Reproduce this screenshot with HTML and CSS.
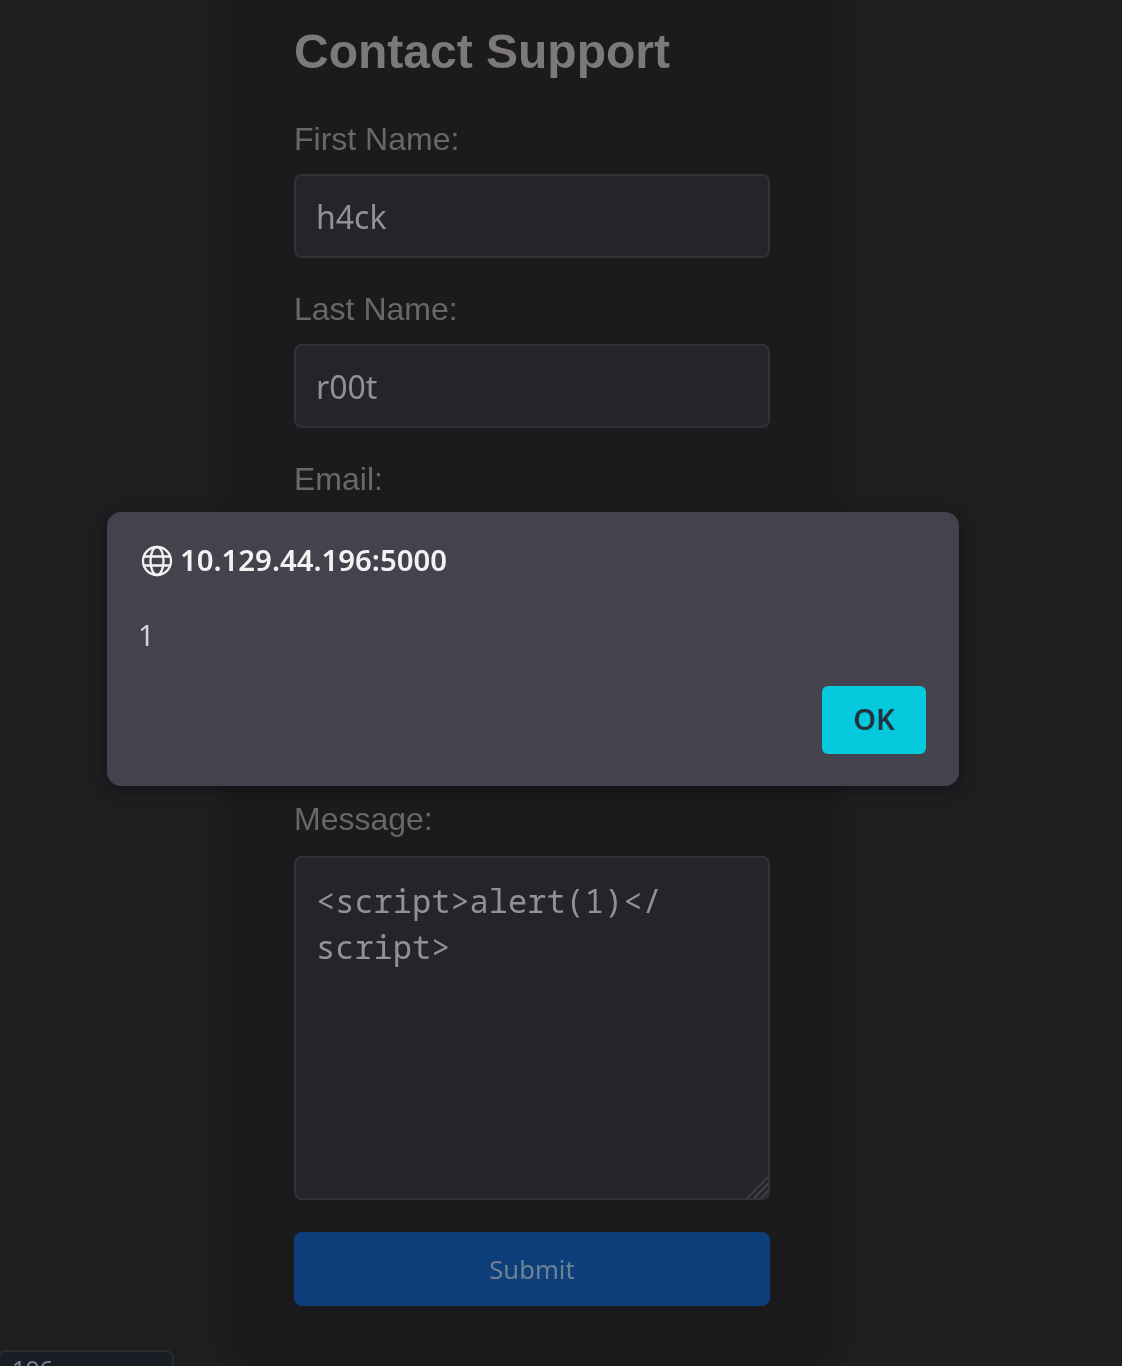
FILE: index.html
```html
<!DOCTYPE html>
<html lang="en">
<head>
    <meta charset="UTF-8">
    <meta name="viewport" content="width=device-width, initial-scale=1.0">
    <title>Contact Support</title>
    <link rel="stylesheet" href="styles.css">
</head>
<body>

    <div class="contact-container">
        <h1>Contact Support</h1>
        <form class="contact-form">
            <label for="first_name">First Name:</label>
            <input type="text" id="first_name" value="h4ck">

            <label for="last_name">Last Name:</label>
            <input type="text" id="last_name" value="r00t">

            <label for="email">Email:</label>
            <input type="text" id="email">

            <!-- this field sits behind the dialog, only its space shows -->
            <label for="hidden_field">&nbsp;</label>
            <input type="text" id="hidden_field">

            <label for="message">Message:</label>
            <div class="message-box">
                <textarea id="message">&lt;script&gt;alert(1)&lt;/
script&gt;</textarea>
                <span class="resize-grip"></span>
            </div>

            <button type="button" class="submit-btn">Submit</button>
        </form>
    </div>

    <div class="corner-tag">196</div>

    <div class="alert-box">
        <div class="alert-origin">
            <svg class="globe" viewBox="0 0 32 32" fill="none" stroke="currentColor" stroke-width="2.3">
                <circle cx="16" cy="16" r="14"/>
                <ellipse cx="16" cy="16" rx="6.5" ry="14"/>
                <path d="M3 11.5h26M3 20.5h26"/>
            </svg>
            <span>10.129.44.196:5000</span>
        </div>
        <div class="alert-text">1</div>
        <div class="alert-actions">
            <button type="button" class="ok-btn">OK</button>
        </div>
    </div>

</body>
</html>
```

FILE: styles.css
```css
html {
    height: 100%;
    overflow: hidden;
}

/* the reference is an upscaled capture, so everything is slightly soft */
body {
    font-family: "Liberation Sans", Arial, sans-serif;
    margin: 0;
    height: 1366px;
    overflow: hidden;
    background: #1e1e21;
    color: #6f6c69;
    filter: blur(0.5px);
}

/* Form Container */
.contact-container {
    width: 476px;
    height: 1366px;
    margin-left: 230px;
    padding: 0 64px;
    background: #1b1b1d;
    border-radius: 0 0 32px 32px;
    box-shadow: 0 0 16px #1b1b1d;
}

h1 {
    font-size: 48px;
    line-height: 54px;
    font-weight: bold;
    color: #7c7976;
    margin: 0;
    padding-top: 25px;
}

.contact-form {
    display: flex;
    flex-direction: column;
}

label {
    display: block;
    font-size: 32px;
    line-height: 38px;
    color: #6a6764;
    height: 38px;
    margin-top: 32px;
    margin-bottom: 16px;
}

.contact-form label:first-child {
    margin-top: 41px;
}

input[type="text"], textarea {
    box-sizing: border-box;
    width: 476px;
    background: #26242a;
    border: 2px solid #313136;
    border-radius: 8px;
    color: #939292;
    outline: none;
    margin: 0;
}

input[type="text"] {
    height: 84px;
    padding: 0 20px;
    font-family: "Noto Sans", sans-serif;
    font-size: 32px;
}

.message-box {
    position: relative;
    height: 344px;
    margin-top: 2px;
}

textarea {
    display: block;
    height: 344px;
    padding: 20px 20px;
    font-family: "Noto Sans Mono", "DejaVu Sans Mono", monospace;
    font-size: 32px;
    line-height: 46px;
    resize: none;
}

.resize-grip {
    position: absolute;
    right: 2px;
    bottom: 2px;
    width: 22px;
    height: 22px;
    background: repeating-linear-gradient(135deg, #3f3f44 0 2px, transparent 2px 5px);
    clip-path: polygon(100% 0, 100% 100%, 0 100%);
}

.submit-btn {
    width: 476px;
    height: 74px;
    margin-top: 32px;
    padding-top: 2px;
    background: #0e3f7b;
    border: none;
    border-radius: 8px;
    color: #6e8094;
    font-family: "Noto Sans", sans-serif;
    font-size: 25.6px;
}

.corner-tag {
    position: absolute;
    left: -2px;
    top: 1350px;
    width: 176px;
    height: 30px;
    padding-left: 12px;
    box-sizing: border-box;
    background: #191d26;
    border: 2px solid #2b2c30;
    border-radius: 8px;
    color: #7f8590;
    font-family: "Noto Sans", sans-serif;
    font-size: 24px;
    line-height: 34px;
}

/* Alert Dialog */
.alert-box {
    position: absolute;
    left: 107px;
    top: 512px;
    width: 852px;
    height: 274px;
    box-sizing: border-box;
    padding: 32px 33px 32px 32px;
    background: #44424d;
    border-radius: 14px;
    box-shadow: 0 4px 14px rgba(0, 0, 0, 0.35);
    color: #f2f2f3;
    font-family: "Noto Sans", sans-serif;
}

.alert-origin {
    display: flex;
    align-items: center;
    gap: 7px;
    height: 34px;
    font-size: 29.3px;
    font-weight: 600;
}

.alert-origin span {
    position: relative;
    top: -1px;
}

.globe {
    width: 32px;
    height: 32px;
    margin-left: 2px;
}

.alert-text {
    margin-top: 35px;
    margin-left: -1px;
    height: 44px;
    font-size: 29px;
    line-height: 44px;
    color: #d5d5d8;
}

.alert-actions {
    display: flex;
    justify-content: flex-end;
    margin-top: 29px;
}

.ok-btn {
    width: 104px;
    height: 68px;
    padding-bottom: 4px;
    background: #04c9dc;
    border: none;
    border-radius: 6px;
    color: #23323f;
    font-family: "Noto Sans", sans-serif;
    font-size: 29px;
    font-weight: 600;
}
```
